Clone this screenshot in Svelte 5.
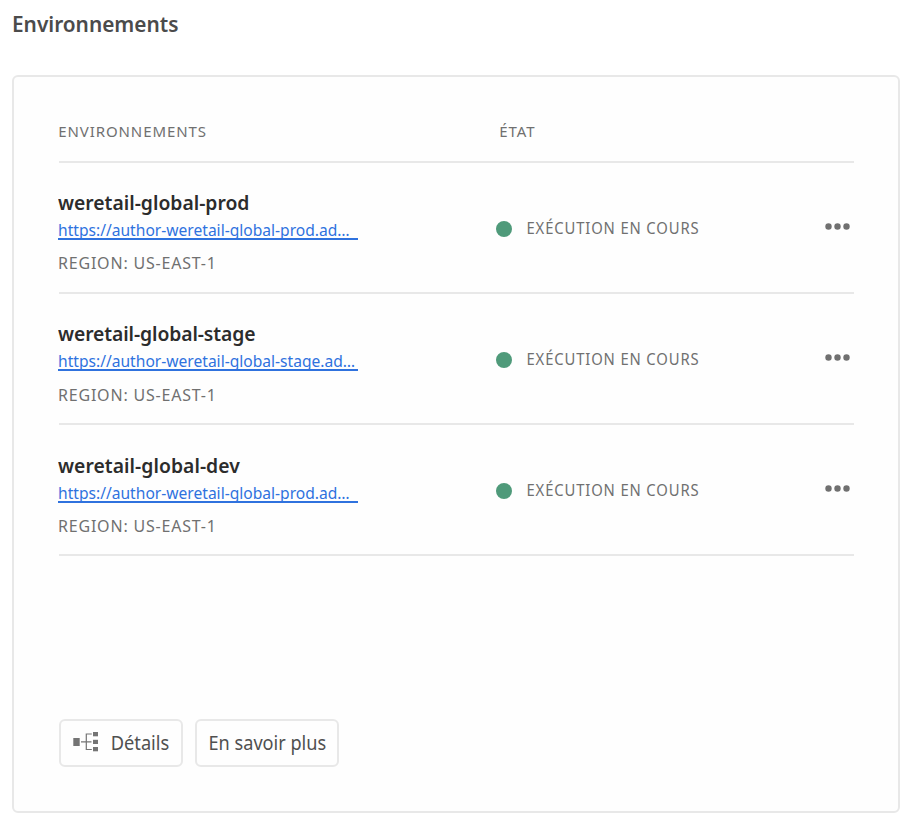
<script>
  const environments = [
    { name: 'weretail-global-prod', url: 'https://author-weretail-global-prod.ad…', shift: 0, gap: 0, tracking: 0 },
    { name: 'weretail-global-stage', url: 'https://author-weretail-global-stage.ad…', shift: 0, gap: 1, tracking: -0.1 },
    { name: 'weretail-global-dev', url: 'https://author-weretail-global-prod.ad…', shift: 1, gap: 0, tracking: 0.05 }
  ];
</script>

<main>
  <h1><span>Environnements</span></h1>
  <section class="card">
    <div class="head">
      <div class="col"><span>ENVIRONNEMENTS</span></div>
      <div><span>ÉTAT</span></div>
    </div>
    {#each environments as env}
      <div class="row">
        <div class="info" style="padding-top: {27 + env.shift}px">
          <div class="name"><span style="letter-spacing: {env.tracking}px">{env.name}</span></div>
          <a href="#env"><span>{env.url}</span></a>
          <div class="region" style="margin-top: {13 + env.gap}px"><span>REGION: US-EAST-1</span></div>
        </div>
        <div class="status"><i class="dot"></i><span>EXÉCUTION EN COURS</span></div>
        <button class="more" aria-label="Plus">
          <svg width="26" height="8" viewBox="0 0 26 8"><g fill="#707070"><circle cx="4.5" cy="3.5" r="3.2" /><circle cx="13.5" cy="3.5" r="3.2" /><circle cx="22.5" cy="3.5" r="3.2" /></g></svg>
        </button>
      </div>
    {/each}
    <div class="actions">
      <button class="btn details">
        <svg width="26" height="22" viewBox="0 0 26 22"><g fill="#747474"><rect x="0.3" y="6" width="6.4" height="8" /><rect x="20" y="0" width="5" height="4.3" /><rect x="20" y="7.8" width="5" height="4.2" /><rect x="20" y="15" width="5" height="4.3" /></g><path d="M8 9.8H18.5M18.8 2H13.3V17.5H18.8" fill="none" stroke="#747474" stroke-width="1.2" /></svg>
        <span>Détails</span>
      </button>
      <button class="btn learn"><span>En savoir plus</span></button>
    </div>
  </section>
</main>

<style>
  :global(body) { background: #fff; }
  main {
    box-sizing: border-box;
    width: 910px;
    height: 828px;
    padding: 7px 10px 15px 12px;
    font-family: 'Noto Sans', 'Open Sans', sans-serif;
    color: #707070;
    white-space: nowrap;
  }
  span {
    display: inline-block;
    transform-origin: 0 50%;
  }
  h1 {
    margin: 0;
    height: 68px;
    font-size: 22px;
    line-height: 32px;
    font-weight: 600;
    color: #4b4b4b;
  }
  h1 span { transform: scaleX(0.946); }
  .card {
    box-sizing: border-box;
    width: 888px;
    height: 738px;
    border: 2px solid #e8e8e8;
    border-radius: 6px;
    padding: 38px 44px 0 45px;
    background: #fefefe;
    display: flex;
    flex-direction: column;
  }
  .head {
    height: 46px;
    border-bottom: 2px solid #e8e8e8;
    display: flex;
    font-size: 15px;
    line-height: 32px;
    letter-spacing: 0.9px;
  }
  .head span { transform: translateX(-0.7px); }
  .col { width: 441px; }
  .row {
    box-sizing: border-box;
    height: 131px;
    border-bottom: 2px solid #e8e8e8;
    display: flex;
  }
  .info { width: 438px; margin-left: -1px; box-sizing: border-box; }
  .name { height: 25px; font-size: 20.5px; line-height: 24px; font-weight: 600; color: #2c2c2c; }
  .name span { transform: scaleX(0.942); }
  a {
    display: block;
    box-sizing: border-box;
    width: 300px;
    height: 25px;
    border-bottom: 2px solid #2f72de;
    color: #2f72de;
    text-decoration: none;
    font-size: 16.5px;
    line-height: 30px;
  }
  a span { height: 23px; transform: scaleX(0.945); }
  .region { font-size: 16px; line-height: 20px; letter-spacing: 0.8px; height: 20px; }
  .status {
    height: 131px;
    display: flex;
    align-items: center;
    font-size: 15.5px;
    letter-spacing: 0.9px;
    width: 328px;
  }
  .status span { transform: translate(-0.5px, -0.6px) scaleX(0.956); }
  .dot {
    width: 16px;
    height: 16px;
    margin-right: 15px;
    border-radius: 50%;
    background: #4f9a7a;
  }
  .more { border: 0; background: none; padding: 0; height: 127px; display: flex; align-items: center; }
  .actions { display: flex; gap: 12px; margin-top: 163px; }
  .btn {
    box-sizing: border-box;
    height: 48px;
    border: 2px solid #e8e8e8;
    border-radius: 6px;
    background: #fefefe;
    font: inherit;
    font-size: 20px;
    color: #505050;
    display: flex;
    align-items: center;
    padding: 0 0 0 12px;
  }
  .btn span { transform: translate(-0.3px, -1px) scaleX(0.912); }
  .learn span { transform: translate(-0.5px, -1px) scaleX(0.907); }
  .details { width: 124px; gap: 12px; }
  .learn { width: 144px; }
</style>
